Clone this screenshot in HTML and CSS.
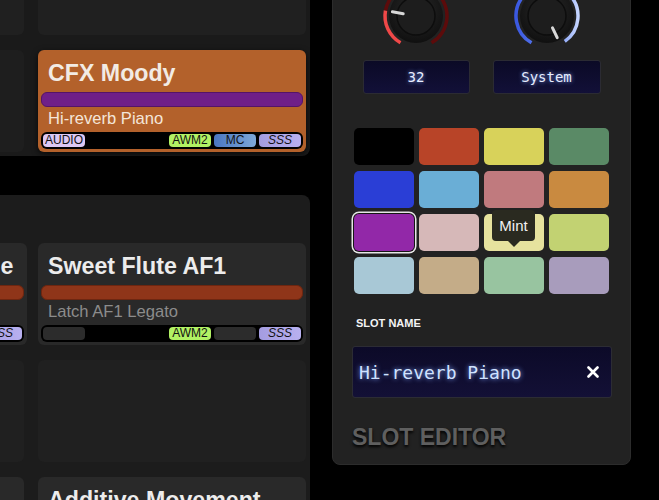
FILE: index.html
```html
<!DOCTYPE html>
<html>
  <head>
    <title>Slot Editor</title>
    <link rel="stylesheet" href="styles.css">
  </head>
  <body>
    <div class="rack">
      <div class="panel">
        <div class="slot empty"></div>
        <div class="slot empty"></div>
        <div class="slot empty dim"></div>
        <div class="slot orange">
          <div class="title">CFX Moody</div>
          <div class="bar purple"></div>
          <div class="sub">Hi-reverb Piano</div>
          <div class="tags">
            <span class="tag audio">AUDIO</span>
            <span class="spacer"></span>
            <span class="tag awm">AWM2</span>
            <span class="tag mc">MC</span>
            <span class="tag sss">SSS</span>
          </div>
        </div>
      </div>

      <div class="panel lower">
        <div class="slot wide">
          <div class="title">Glossy Synth Machine</div>
          <div class="bar red"></div>
          <div class="sub">Soft Layer Tone</div>
          <div class="tags">
            <span class="tag off"></span>
            <span class="spacer"></span>
            <span class="tag awm">AWM2</span>
            <span class="tag off"></span>
            <span class="tag sss">SSS</span>
          </div>
        </div>
        <div class="slot">
          <div class="title">Sweet Flute AF1</div>
          <div class="bar red"></div>
          <div class="sub">Latch AF1 Legato</div>
          <div class="tags">
            <span class="tag off"></span>
            <span class="spacer"></span>
            <span class="tag awm">AWM2</span>
            <span class="tag off"></span>
            <span class="tag sss">SSS</span>
          </div>
        </div>
        <div class="slot empty"></div>
        <div class="slot empty"></div>
        <div class="slot"></div>
        <div class="slot">
          <div class="title">Additive Movement</div>
        </div>
      </div>
    </div>

    <div class="editor">
      <div class="controls">
        <div class="ctl">
          <svg class="knob" width="70" height="70" viewBox="0 0 70 70">
            <defs>
              <radialGradient id="kb" cx="50%" cy="40%" r="60%">
                <stop offset="0" stop-color="#2b2b2b" />
                <stop offset="1" stop-color="#101010" />
              </radialGradient>
            </defs>
            <path d="M4.47 29.62 A31 31 0 1 1 50.5 61.85" fill="none" stroke="#5c0b0b" stroke-width="3.5" />
            <path d="M19.5 61.85 A31 31 0 0 1 4.47 29.62" fill="none" stroke="#f04848" stroke-width="3.5" />
            <circle cx="35" cy="35" r="27" fill="url(#kb)" />
            <circle cx="35" cy="35" r="19" fill="#1d1d1d" stroke="#0d0d0d" stroke-width="1.5" />
            <line x1="22.2" y1="32.7" x2="11.4" y2="30.8" stroke="#d8d8d8" stroke-width="3" stroke-linecap="round" />
          </svg>
          <div class="display">32</div>
        </div>
        <div class="ctl">
          <svg class="knob" width="70" height="70" viewBox="0 0 70 70">
            <defs>
              <linearGradient id="bl" x1="0" y1="0" x2="1" y2="0">
                <stop offset="0" stop-color="#3a58e0" />
                <stop offset="0.6" stop-color="#6c8cf4" />
                <stop offset="1" stop-color="#c4d4ff" />
              </linearGradient>
            </defs>
            <path d="M19.5 61.85 A31 31 0 1 1 52.78 60.39" fill="none" stroke="url(#bl)" stroke-width="3.5" />
            <circle cx="35" cy="35" r="27" fill="url(#kb)" />
            <circle cx="35" cy="35" r="19" fill="#1d1d1d" stroke="#0d0d0d" stroke-width="1.5" />
            <line x1="40.5" y1="46.8" x2="45.2" y2="56.7" stroke="#d8d8d8" stroke-width="3" stroke-linecap="round" />
          </svg>
          <div class="display">System</div>
        </div>
      </div>

      <div class="swatches">
        <div class="sw" style="background:#000000"></div>
        <div class="sw" style="background:#b84428"></div>
        <div class="sw" style="background:#d8d25a"></div>
        <div class="sw" style="background:#5a8a66"></div>
        <div class="sw" style="background:#2a3ed6"></div>
        <div class="sw" style="background:#6aaed6"></div>
        <div class="sw" style="background:#c07a7e"></div>
        <div class="sw" style="background:#c98a40"></div>
        <div class="sw selected" style="background:#9228a8"></div>
        <div class="sw" style="background:#d6b8b8"></div>
        <div class="sw" style="background:#e6e29e">
          <div class="tip">Mint</div>
        </div>
        <div class="sw" style="background:#c2d272"></div>
        <div class="sw" style="background:#a8c8d6"></div>
        <div class="sw" style="background:#c4ac88"></div>
        <div class="sw" style="background:#98c4a0"></div>
        <div class="sw" style="background:#a89cbc"></div>
      </div>

      <div class="label">SLOT NAME</div>
      <div class="name-input">
        <span>Hi-reverb Piano</span>
        <svg class="clear" width="12" height="12" viewBox="0 0 12 12">
          <path d="M1.5 1.5 L10.5 10.5 M10.5 1.5 L1.5 10.5" stroke="#ffffff" stroke-width="2.6" stroke-linecap="round" />
        </svg>
      </div>

      <div class="heading">SLOT EDITOR</div>
    </div>
  </body>
</html>
```

FILE: styles.css
```css
body,
html {
  height: 100%;
  width: 100%;
  overflow: hidden;
}

body {
  margin: 0;
  background: #000000;
  font-family: 'Liberation Sans', Arial, sans-serif;
  display: flex;
  align-items: flex-start;
}

.rack {
  flex: none;
  width: 558px;
  margin-left: -248px;
  margin-top: -71px;
  display: flex;
  flex-direction: column;
  gap: 39px;
}

.panel {
  background: #1a1a1a;
  border-radius: 8px;
  padding: 4px;
  display: grid;
  grid-template-columns: 268px 268px;
  grid-auto-rows: 102px;
  column-gap: 14px;
  row-gap: 15px;
}

.panel.lower {
  background: #1c1c1c;
  padding-top: 48px;
}

.slot {
  background: #292929;
  border-radius: 6px;
  padding: 3px;
  display: flex;
  flex-direction: column;
  overflow: hidden;
}

/* left neighbour is a little wider than its column */
.slot.wide {
  margin-right: -3px;
}

.slot.empty {
  background: #202020;
}

.slot.dim {
  background: #1e1e1e;
}

.slot.orange {
  background: #b3612b;
  box-shadow: 0 2px 6px rgba(0, 0, 0, 0.7);
}

.title {
  padding: 5px 0 0 7px;
  line-height: 30px;
  font-size: 23.2px;
  font-weight: bold;
  color: #ececec;
  white-space: nowrap;
}

.orange .title {
  color: #f2ebe4;
}

.bar {
  margin-top: 4px;
  height: 15px;
  border-radius: 6px;
  box-sizing: border-box;
}

.bar.purple {
  background: #6f1f88;
  border: 1px solid #541468;
}

.bar.red {
  background: #8f3519;
  border: 1px solid #6e2610;
}

.sub {
  padding-left: 7px;
  line-height: 23px;
  font-size: 16.6px;
  color: #8c8c8c;
  white-space: nowrap;
}

.orange .sub {
  color: #f4e6da;
}

.tags {
  margin-top: 2px;
  height: 17px;
  background: #000;
  border-radius: 6px;
  padding: 2px;
  box-sizing: border-box;
  display: flex;
  gap: 3px;
}

.spacer {
  flex: 1;
}

.tag {
  width: 42px;
  height: 13px;
  border-radius: 4px;
  font-size: 12px;
  line-height: 13px;
  text-align: center;
  color: #121212;
}

.tag.audio {
  background: #dcc8f4;
}

.tag.awm {
  background: #b2f264;
}

.tag.mc {
  background: linear-gradient(90deg, #4a76c0, #7ea8d8);
}

.tag.sss {
  background: linear-gradient(90deg, #a49ce0, #b8b0f0);
  font-style: italic;
}

.tag.off {
  background: #2c2c2c;
}

.editor {
  flex: none;
  width: 299px;
  margin-left: 22px;
  margin-top: -30px;
  padding: 10px 20px 14px;
  box-sizing: border-box;
  background: #222222;
  border: 1px solid #2c2c2c;
  border-radius: 8px;
  box-shadow: 0 2px 8px rgba(0, 0, 0, 0.8);
  display: flex;
  flex-direction: column;
}

.controls {
  display: grid;
  grid-template-columns: 107px 108px;
  column-gap: 23px;
  justify-content: center;
}

.ctl {
  display: flex;
  flex-direction: column;
  align-items: center;
}

.knob {
  display: block;
}

.display {
  margin-top: 9px;
  width: 100%;
  height: 34px;
  box-sizing: border-box;
  background: linear-gradient(180deg, #0b0a26, #121038);
  border: 1px solid #2b2b33;
  border-radius: 3px;
  font-family: 'DejaVu Sans Mono', monospace;
  font-size: 14px;
  line-height: 32px;
  text-align: center;
  color: #e8eeff;
  text-shadow: 0 0 4px #7ea4ff;
}

.swatches {
  margin: 34px 0 0 1px;
  display: grid;
  grid-template-columns: repeat(4, 60px);
  grid-auto-rows: 37px;
  gap: 6px 5px;
}

.sw {
  position: relative;
  border-radius: 5px;
}

.sw.selected {
  box-shadow: 0 0 0 1px #151515, 0 0 0 2.5px #e6e6e6;
}

.tip {
  position: absolute;
  left: 8px;
  top: -4px;
  width: 43px;
  height: 31px;
  background: #2a2a20;
  border-radius: 4px;
  color: #f2f2f2;
  font-size: 15px;
  line-height: 31px;
  text-align: center;
}

.tip::after {
  content: '';
  position: absolute;
  left: 16px;
  bottom: -6px;
  border-left: 6px solid transparent;
  border-right: 6px solid transparent;
  border-top: 6px solid #2a2a20;
}

.label {
  margin: 23px 0 0 3px;
  font-size: 11px;
  line-height: 13px;
  font-weight: bold;
  color: #f4f4f4;
}

.name-input {
  margin: 16px -2px 0 -1px;
  height: 52px;
  box-sizing: border-box;
  padding: 0 12px 0 6px;
  background: linear-gradient(180deg, #0c0a28, #131036);
  border: 1px solid #2c2c34;
  border-radius: 3px;
  display: flex;
  align-items: center;
  justify-content: space-between;
  font-family: 'DejaVu Sans Mono', monospace;
  font-size: 18px;
  color: #d0e2ff;
  text-shadow: 0 0 5px #7ea4ff;
}

.clear {
  display: block;
}

.heading {
  margin: 26px 0 0 -1px;
  font-size: 23px;
  line-height: 26px;
  font-weight: bold;
  color: #5f5f5f;
  text-shadow: 0 2px 3px #000;
}
```
